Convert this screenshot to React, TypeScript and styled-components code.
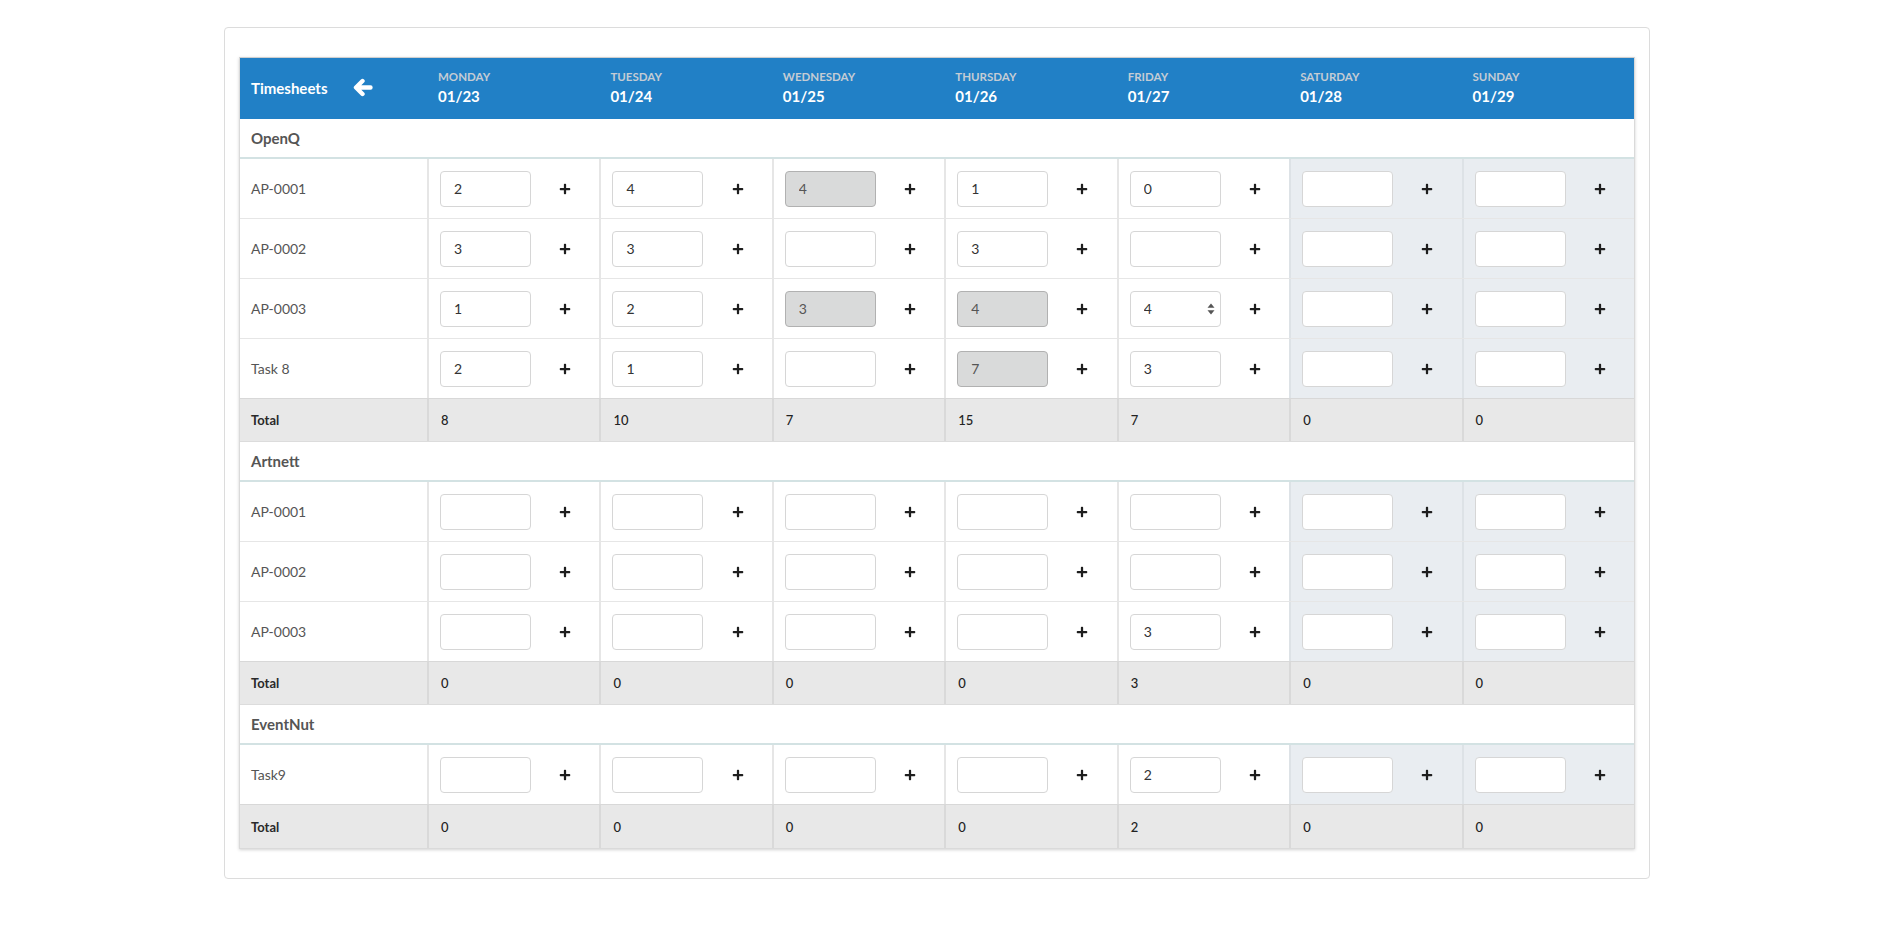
import React from 'react';
import styled, { createGlobalStyle } from 'styled-components';
import { FaPlus } from 'react-icons/fa';

const GlobalStyle = createGlobalStyle`
  html, body { margin: 0; padding: 0; background: #fff; }
  body { font-family: Lato, "Open Sans", "Liberation Sans", Arial, sans-serif; color: #333; }
  * { box-sizing: border-box; }
`;

const Page = styled.div`
  padding: 27px 0 40px 224px;
`;

const Card = styled.div`
  width: 1426px;
  background: #fff;
  border: 1px solid #dcdcdc;
  border-radius: 4px;
  padding: 29px 14px;
`;

const Table = styled.div`
  width: 1396px;
  border: 1px solid #dadada;
  border-top-color: #cfcfcf;
  box-shadow: 0 1px 3px rgba(0, 0, 0, 0.18);
  background: #fff;
`;

const Grid = styled.div`
  display: grid;
  grid-template-columns: 187px repeat(7, minmax(0, 1fr));
`;

const HeaderRow = styled(Grid)`
  height: 61px;
  background: #2180c6;
  color: #fff;
`;

const TitleCell = styled.div`
  display: flex;
  align-items: center;
  padding-left: 11px;
  gap: 26px;
  font-size: 15px;
  font-weight: 700;
  padding-bottom: 2px;
`;

const HeaderDay = styled.div`
  display: flex;
  flex-direction: column;
  justify-content: center;
  padding-left: 11px;
  padding-bottom: 3px;
`;

const DayName = styled.div`
  font-size: 11.5px;
  line-height: 14px;
  font-weight: 700;
  text-transform: uppercase;
  color: #c4ccd4;
`;

const DayDate = styled.div`
  margin-top: 3px;
  font-size: 15px;
  line-height: 18px;
  font-weight: 700;
  color: #fff;
`;

const GroupRow = styled.div`
  height: 40px;
  display: flex;
  align-items: center;
  padding-left: 11px;
  font-size: 15px;
  font-weight: 700;
  color: #555;
  background: #fff;
  border-bottom: 2px solid #d3e2e3;
`;

const TaskRow = styled(Grid)<{ $last?: boolean }>`
  height: 60px;
  border-bottom: 1px solid ${(p) => (p.$last ? '#d8d8d8' : '#e6e6e6')};
`;

const LabelCell = styled.div`
  display: flex;
  align-items: center;
  padding-left: 11px;
  font-size: 14px;
  color: #555;
`;

const DayCell = styled.div<{ $weekend?: boolean }>`
  display: flex;
  align-items: center;
  padding-left: 11px;
  border-left: 2px solid ${(p) => (p.$weekend ? '#dde2e6' : '#e6e6e6')};
  background: ${(p) => (p.$weekend ? '#e9edf1' : '#fff')};
`;

const InputWrap = styled.div`
  position: relative;
  width: 91px;
  height: 36px;
  flex: none;
`;

const HourInput = styled.input`
  width: 100%;
  height: 100%;
  padding: 0 0 0 13px;
  border: 1px solid #d6d6d6;
  border-radius: 4px;
  background: #fff;
  font-family: Lato, "Open Sans", "Liberation Sans", Arial, sans-serif;
  font-size: 14px;
  color: #333;
  outline: none;
  &:disabled {
    background: #d9dada;
    border-color: #b1b1b1;
    color: #555;
  }
`;

const Spin = styled.span`
  position: absolute;
  right: 6px;
  top: 50%;
  transform: translateY(-50%);
  display: flex;
  color: #555;
`;

const PlusSlot = styled.div`
  flex: 1;
  display: flex;
  justify-content: center;
  align-items: center;
  color: #1e1e1e;
  font-size: 12px;
`;

const TotalRow = styled(Grid)<{ $end?: boolean }>`
  height: 43px;
  background: #e8e8e8;
  border-bottom: ${(p) => (p.$end ? 'none' : '1px solid #dcdcdc')};
`;

const TotalLabel = styled.div`
  display: flex;
  align-items: center;
  padding-left: 11px;
  font-size: 13px;
  font-weight: 700;
  color: #2a2a2a;
`;

const TotalCell = styled.div`
  display: flex;
  align-items: center;
  padding-left: 12px;
  border-left: 2px solid #d9d9d9;
  font-size: 13px;
  font-weight: 500;
  color: #222;
`;

type Cell = { v: string; disabled?: boolean; hover?: boolean };

const days = [
  ['Monday', '01/23'],
  ['Tuesday', '01/24'],
  ['Wednesday', '01/25'],
  ['Thursday', '01/26'],
  ['Friday', '01/27'],
  ['Saturday', '01/28'],
  ['Sunday', '01/29'],
];

const c = (v: string, disabled = false, hover = false): Cell => ({ v, disabled, hover });
const empty = () => [c(''), c(''), c(''), c(''), c(''), c(''), c('')];

const groups: { name: string; tasks: { label: string; cells: Cell[] }[]; totals: string[] }[] = [
  {
    name: 'OpenQ',
    tasks: [
      { label: 'AP-0001', cells: [c('2'), c('4'), c('4', true), c('1'), c('0'), c(''), c('')] },
      { label: 'AP-0002', cells: [c('3'), c('3'), c(''), c('3'), c(''), c(''), c('')] },
      { label: 'AP-0003', cells: [c('1'), c('2'), c('3', true), c('4', true), c('4', false, true), c(''), c('')] },
      { label: 'Task 8', cells: [c('2'), c('1'), c(''), c('7', true), c('3'), c(''), c('')] },
    ],
    totals: ['8', '10', '7', '15', '7', '0', '0'],
  },
  {
    name: 'Artnett',
    tasks: [
      { label: 'AP-0001', cells: empty() },
      { label: 'AP-0002', cells: empty() },
      { label: 'AP-0003', cells: [c(''), c(''), c(''), c(''), c('3'), c(''), c('')] },
    ],
    totals: ['0', '0', '0', '0', '3', '0', '0'],
  },
  {
    name: 'EventNut',
    tasks: [{ label: 'Task9', cells: [c(''), c(''), c(''), c(''), c('2'), c(''), c('')] }],
    totals: ['0', '0', '0', '0', '2', '0', '0'],
  },
];

const SpinIcon = () => (
  <svg width="8" height="12" viewBox="0 0 8 12">
    <path d="M4 0.5 L7.5 4.8 L0.5 4.8 Z" fill="currentColor" />
    <path d="M4 11.5 L7.5 7.2 L0.5 7.2 Z" fill="currentColor" />
  </svg>
);

const BackArrow = () => (
  <svg width="20" height="19" viewBox="0 0 20 19" fill="none">
    <path
      d="M17.5 9.5 H4 M9.5 3 L3 9.5 L9.5 16"
      stroke="#fff"
      strokeWidth="4.4"
      strokeLinecap="round"
      strokeLinejoin="round"
    />
  </svg>
);

export default function App() {
  return (
    <>
      <GlobalStyle />
      <Page>
        <Card>
          <Table>
            <HeaderRow>
              <TitleCell>
                <span>Timesheets</span>
                <BackArrow />
              </TitleCell>
              {days.map(([n, d]) => (
                <HeaderDay key={n}>
                  <DayName>{n}</DayName>
                  <DayDate>{d}</DayDate>
                </HeaderDay>
              ))}
            </HeaderRow>
            {groups.map((g, gi) => (
              <React.Fragment key={g.name}>
                <GroupRow>{g.name}</GroupRow>
                {g.tasks.map((t, ti) => (
                  <TaskRow key={t.label} $last={ti === g.tasks.length - 1}>
                    <LabelCell>{t.label}</LabelCell>
                    {t.cells.map((cell, di) => (
                      <DayCell key={di} $weekend={di >= 5}>
                        <InputWrap>
                          {cell.disabled ? (
                            <HourInput type="text" value={cell.v} disabled readOnly />
                          ) : (
                            <HourInput type="text" defaultValue={cell.v} />
                          )}
                          {cell.hover && (
                            <Spin>
                              <SpinIcon />
                            </Spin>
                          )}
                        </InputWrap>
                        <PlusSlot>
                          <FaPlus />
                        </PlusSlot>
                      </DayCell>
                    ))}
                  </TaskRow>
                ))}
                <TotalRow $end={gi === groups.length - 1}>
                  <TotalLabel>Total</TotalLabel>
                  {g.totals.map((v, i) => (
                    <TotalCell key={i}>{v}</TotalCell>
                  ))}
                </TotalRow>
              </React.Fragment>
            ))}
          </Table>
        </Card>
      </Page>
    </>
  );
}
